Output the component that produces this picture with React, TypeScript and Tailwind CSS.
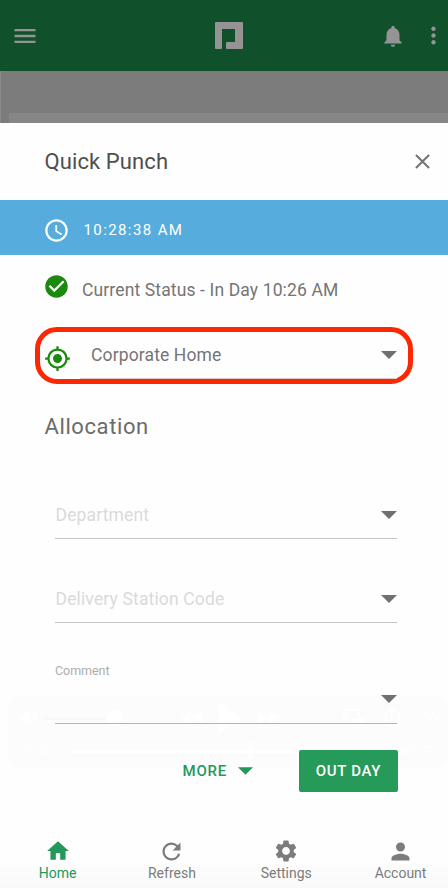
import type { ReactNode } from 'react';
import {
  MdAccessTime,
  MdCheckCircle,
  MdClose,
  MdMenu,
  MdMoreVert,
  MdMyLocation,
  MdNotifications,
  MdPerson,
  MdRefresh,
  MdSettings,
} from 'react-icons/md';

function Caret({ className }: { className: string }) {
  return (
    <svg viewBox="0 0 16 8" className={className} fill="currentColor">
      <path d="M0 0h16L8 8z" />
    </svg>
  );
}

function HomeIcon() {
  return (
    <svg viewBox="0 0 24 24" className="size-[26px]" fill="currentColor">
      <path d="M10 20v-6h4v6h5v-8h3L12 3 2 12h3v8z" />
    </svg>
  );
}

function AppBar() {
  return (
    <header className="flex h-[71px] items-center bg-[#10512c] pl-[10.5px] text-[#959393]">
      <MdMenu className="size-7" />
      <svg viewBox="0 0 28 27" className="ml-[176.5px] h-[27px] w-7" fill="currentColor">
        <path d="M1 0h26a1 1 0 0 1 1 1v25a1 1 0 0 1-1 1H12a1 1 0 0 1-1-1v-5a1 1 0 0 1 1-1h8V7H7v19a1 1 0 0 1-1 1H1a1 1 0 0 1-1-1V1a1 1 0 0 1 1-1z" />
      </svg>
      <MdNotifications className="ml-[137px] size-[26px]" />
      <MdMoreVert className="ml-[14px] size-[27px] shrink-0" />
    </header>
  );
}

function SelectField({ label }: { label: string }) {
  return (
    <div className="ml-[55px] flex h-[84px] w-[342px] items-end border-b border-[#c4c4c4] pb-[11px] pl-[0.5px]">
      <span className="text-[17.5px] leading-6 tracking-[0.15px] text-[#dadada]">{label}</span>
      <Caret className="mb-2 ml-auto h-2 w-4 text-[#707070]" />
    </div>
  );
}

// Faded-out media controls, kept behind the form
function PlayerControls() {
  return (
    <div className="absolute top-[572px] left-2 -z-10 h-[73px] w-[440px] rounded-xl bg-[#fcfcfc] text-white">
      <svg viewBox="0 0 440 73" className="h-[73px] w-[440px]" fill="currentColor">
        <path d="M12 20h3l6-4v14l-6-4h-3z" />
        <path d="M23 19q3 4 0 8M26 17q4 6 0 12" fill="none" stroke="currentColor" strokeWidth="1.5" />
        <rect x="35" y="22" width="65" height="3" fill="#f5f9fc" />
        <circle cx="106" cy="23" r="8" />
        <path d="M183 17v12l-11-6zM194 17v12l-11-6zM211 9v29l24-14zM250 17v12l11-6zM261 17v12l11-6z" transform="translate(0 -.5)" />
        <path d="M343 29h-7V15h15v6M338 18l5 5M380 19h-2v11h13V19h-3M384 25V13m-3 3 3-3 3 3M416 16l6 7-6 7M423 16l6 7-6 7" fill="none" stroke="currentColor" strokeWidth="1.5" />
        <rect x="344" y="23" width="12" height="6" />
        <rect x="62" y="55" width="335" height="3" />
        <rect x="241" y="47" width="4" height="17" rx="1" />
      </svg>
      <span className="absolute top-[46px] left-3 text-[13px] leading-[18px]">00:25</span>
      <span className="absolute top-[46px] right-[11px] text-[13px] leading-[18px]">00:43</span>
    </div>
  );
}

function NavItem({ icon, label, active }: { icon: ReactNode; label: string; active?: boolean }) {
  return (
    <div
      className={`flex w-[114.3px] flex-col items-center ${active ? 'text-[#22995a]' : 'text-[#7c7c7c]'}`}
    >
      <div className="flex h-[26px] items-center">{icon}</div>
      <span className="text-[14px] leading-[19px]">{label}</span>
    </div>
  );
}

export default function App() {
  return (
    <div className="flex h-[888px] w-[448px] flex-col overflow-hidden bg-[#7c7c7c] font-['Roboto',sans-serif]">
      <AppBar />
      <div className="h-[52px] shrink-0 border-l border-[#8a8a8a] pt-[42px] pl-2">
        <div className="h-[10px] bg-[#868686]" />
      </div>

      <main className="relative isolate flex h-[765px] shrink-0 flex-col bg-[#fefefe]">
        <PlayerControls />
        <div className="flex h-[77px] shrink-0 items-center pr-[13px] pl-[44.5px]">
          <h1 className="text-[22px] tracking-[0.1px] text-[#4f4f4f]">Quick Punch</h1>
          <MdClose className="ml-auto size-[25px] text-[#757575]" />
        </div>

        <div className="flex h-[55px] shrink-0 items-center gap-[13.5px] bg-[#57acde] pt-[5px] pl-[43px] text-white">
          <MdAccessTime className="size-[27px]" />
          <span className="text-[15px] tracking-[1.4px]">10:28:38 AM</span>
        </div>

        <div className="flex h-[72px] shrink-0 gap-3 pt-[18px] pl-[43px]">
          <MdCheckCircle className="size-[27px] text-[#1a890e]" />
          <span className="pt-[5px] text-[17.5px] leading-6 tracking-[0.13px] text-[#757575]">
            Current Status - In Day 10:26 AM
          </span>
        </div>

        <div className="ml-[34.5px] flex h-[57px] w-[378.5px] shrink-0 rounded-[22px] border-[5px] border-[#fc2803]">
          <MdMyLocation className="mt-[13px] ml-[4.5px] size-[27px] text-[#1a890e]" />
          <div className="ml-[9px] flex h-[47px] w-[317px] border-b border-[#dcc8c4] pt-[11px] pl-[11px]">
            <span className="text-[17.5px] leading-6 tracking-[0.13px] text-[#757575]">Corporate Home</span>
            <Caret className="mt-2 ml-auto h-2 w-4 text-[#707070]" />
          </div>
        </div>

        <h2 className="mt-[27px] h-[44px] shrink-0 pl-[44.5px] text-[22px] leading-8 tracking-[0.6px] text-[#6b6b6b]">
          Allocation
        </h2>

        <SelectField label="Department" />
        <SelectField label="Delivery Station Code" />
        <div className="ml-[55px] flex h-[101px] w-[342px] shrink-0 flex-col border-b border-[#b4b4b4] pt-[39px]">
          <span className="text-[12.5px] leading-[18px] tracking-[-0.05px] text-[#adadad]">Comment</span>
          <Caret className="mt-[15px] h-2 w-4 self-end text-[#707070]" />
        </div>

        <div className="mt-[26px] flex h-[42px] shrink-0 items-center pr-[50px] text-[15px] font-medium">
          <span className="ml-[182.5px] tracking-[0.8px] text-[#22995a]">MORE</span>
          <Caret className="ml-[11px] h-2 w-[15px] text-[#22995a]" />
          <button className="ml-auto h-[42px] w-[99px] rounded-[2px] bg-[#269a59] tracking-[0.7px] text-white">
            OUT DAY
          </button>
        </div>

        <nav className="mt-auto flex h-[60px] w-[458px] shrink-0 bg-linear-to-b from-[#fefefe] from-50% to-[#f9f9f9] pt-[10px] pl-[0.5px]">
          <NavItem icon={<HomeIcon />} label="Home" active />
          <NavItem icon={<MdRefresh className="size-[27px]" />} label="Refresh" />
          <NavItem icon={<MdSettings className="size-[26px]" />} label="Settings" />
          <NavItem icon={<MdPerson className="size-[27px]" />} label="Account" />
        </nav>
      </main>
    </div>
  );
}
